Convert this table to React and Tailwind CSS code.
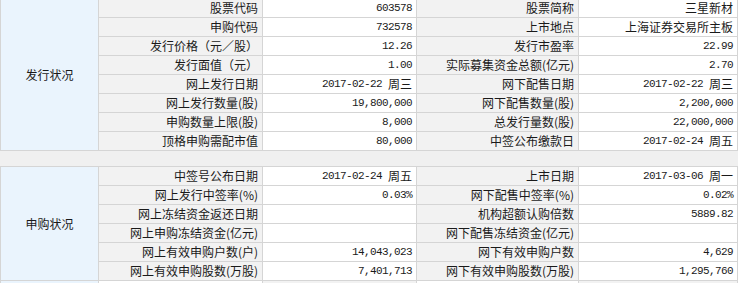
import React from 'react';

const issueRows = [
    ['股票代码', '603578', '', '股票简称', '', '三星新材'],
    ['申购代码', '732578', '', '上市地点', '', '上海证券交易所主板'],
    ['发行价格（元／股）', '12.26', '', '发行市盈率', '22.99', ''],
    ['发行面值（元）', '1.00', '', '实际募集资金总额(亿元)', '2.70', ''],
    ['网上发行日期', '2017-02-22', '周三', '网下配售日期', '2017-02-22', '周三'],
    ['网上发行数量(股)', '19,800,000', '', '网下配售数量(股)', '2,200,000', ''],
    ['申购数量上限(股)', '8,000', '', '总发行量数(股)', '22,000,000', ''],
    ['顶格申购需配市值', '80,000', '', '中签公布缴款日', '2017-02-24', '周五'],
];

const subRows = [
    ['中签号公布日期', '2017-02-24', '周五', '上市日期', '2017-03-06', '周一'],
    ['网上发行中签率(%)', '0.03%', '', '网下配售中签率(%)', '0.02%', ''],
    ['网上冻结资金返还日期', '', '', '机构超额认购倍数', '5889.82', ''],
    ['网上申购冻结资金(亿元)', '', '', '网下配售冻结资金(亿元)', '', ''],
    ['网上有效申购户数(户)', '14,043,023', '', '网下有效申购户数', '4,629', ''],
    ['网上有效申购股数(万股)', '7,401,713', '', '网下有效申购股数(万股)', '1,295,760', ''],
];

const cjk = "font-['Noto_Sans_CJK_SC',sans-serif] text-[12px] text-[#1a1a1a]";

const Label = ({ text }) => (
    <div className={`bg-[#f2f2f2] flex items-center justify-end pr-[4px] whitespace-nowrap leading-none ${cjk}`}>{text}</div>
);

// num = mono digits, day = trailing chinese text (weekday or name)
const Value = ({ num, day }) => (
    <div className="bg-white flex items-center justify-end pr-[4px] whitespace-nowrap leading-none text-[#1a1a1a]">
        {num && <span className="font-['Liberation_Mono',monospace] text-[11px] tracking-[-0.6px]">{num}</span>}
        {day && <span className={`${num ? 'ml-[6px]' : ''} ${cjk}`}>{day}</span>}
    </div>
);

const Row = ({ row }) => (
    <>
        <Label text={row[0]} />
        <Value num={row[1]} day={row[2]} />
        <Label text={row[3]} />
        <Value num={row[4]} day={row[5]} />
    </>
);

const App = () => {
    return (
        <div className="w-[740px] h-[283px] overflow-hidden bg-white">
            <div className="-mt-[2px] w-[738px] grid grid-cols-[97px_163px_153px_161px_158px] auto-rows-[18px] gap-px p-px bg-[#d5d5d5]">
                <div className={`row-span-8 bg-[#eaf4fd] flex items-center justify-center ${cjk}`}>发行状况</div>
                {issueRows.map((row) => (
                    <Row key={row[0]} row={row} />
                ))}
            </div>
            <div className="h-[15px] w-[738px] bg-[#f0f0f0]"></div>
            <div className="w-[738px] grid grid-cols-[97px_163px_153px_161px_158px] auto-rows-[18px] gap-px p-px bg-[#d5d5d5]">
                <div className={`row-span-6 bg-[#eaf4fd] flex items-center justify-center ${cjk}`}>申购状况</div>
                {subRows.map((row) => (
                    <Row key={row[0]} row={row} />
                ))}
                <div className="bg-[#eaf4fd]"></div>
                <div className="bg-white"></div>
                <div className="bg-[#f2f2f2]"></div>
                <div className="bg-white"></div>
                <div className="bg-[#f2f2f2]"></div>
            </div>
        </div>
    );
};

export default App;
